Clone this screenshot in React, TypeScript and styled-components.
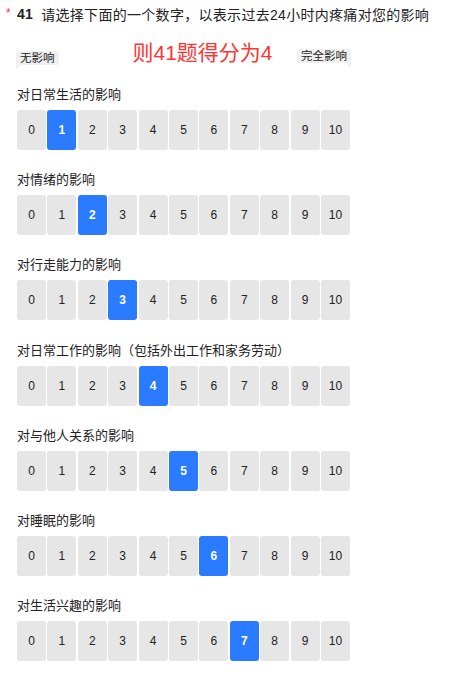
import React from "react";
import styled, { createGlobalStyle } from "styled-components";

const Global = createGlobalStyle`
  html, body { margin: 0; padding: 0; background: #fff; }
  body { font-family: "Liberation Sans", "Noto Sans CJK SC", sans-serif; color: #222; }
`;

const Page = styled.div`
  width: 450px;
  padding: 4px 0 0 0;
  box-sizing: border-box;
`;

const Title = styled.div`
  display: flex;
  align-items: center;
  height: 20px;
  font-size: 14px;
  letter-spacing: 0.3px;
  color: #222;
  white-space: nowrap;
`;

const Star = styled.span`
  color: #f33;
  font-size: 12px;
  width: 17px;
  text-align: center;
  margin-top: -2px;
`;

const Num = styled.span`
  font-weight: bold;
  margin-right: 8px;
`;

const ScaleRow = styled.div`
  display: flex;
  align-items: center;
  width: 335px;
  margin: 22px 0 0 16px;
  height: 22px;
`;

const Bubble = styled.div<{ $tail: "left" | "right" }>`
  position: relative;
  background: #f0f0f0;
  border-radius: 2px;
  font-size: 11.5px;
  line-height: 14px;
  padding: 0 4px;
  color: #222;
  margin-left: ${(p) => (p.$tail === "right" ? "auto" : "0")};
  margin-top: ${(p) => (p.$tail === "left" ? "2px" : "-2px")};
  &::after {
    content: "";
    position: absolute;
    top: 100%;
    ${(p) => (p.$tail === "left" ? "left: 0;" : "right: 0;")}
    border-style: solid;
    border-width: ${(p) => (p.$tail === "left" ? "5px 5px 0 0" : "5px 0 0 5px")};
    border-color: #f0f0f0 transparent transparent transparent;
  }
`;

const Score = styled.div`
  margin-left: 74px;
  font-size: 21px;
  color: #f33;
  line-height: 22px;
  margin-top: -8px;
`;

const Question = styled.div`
  margin: 0 0 0 17px;
`;

const List = styled.div`
  margin-top: 17px;
`;

const Label = styled.div`
  font-size: 13px;
  line-height: 20px;
  color: #222;
  margin-bottom: 5px;
  white-space: nowrap;
`;

const Buttons = styled.div`
  display: grid;
  grid-template-columns: repeat(11, 1fr);
  column-gap: 1.4px;
  width: 333px;
  margin-bottom: 20.2px;
`;

const Btn = styled.div<{ $on: boolean }>`
  height: 40px;
  border-radius: 3px;
  background: ${(p) => (p.$on ? "#2a7bff" : "#e6e6e6")};
  color: ${(p) => (p.$on ? "#fff" : "#222")};
  font-weight: ${(p) => (p.$on ? "bold" : "normal")};
  font-size: 12px;
  display: flex;
  align-items: center;
  justify-content: center;
`;

const items = [
  "对日常生活的影响",
  "对情绪的影响",
  "对行走能力的影响",
  "对日常工作的影响（包括外出工作和家务劳动）",
  "对与他人关系的影响",
  "对睡眠的影响",
  "对生活兴趣的影响",
];

export default function App() {
  return (
    <Page>
      <Global />
      <Title>
        <Star>*</Star>
        <Num>41</Num>
        请选择下面的一个数字，以表示过去24小时内疼痛对您的影响
      </Title>
      <ScaleRow>
        <Bubble $tail="left">无影响</Bubble>
        <Score>则41题得分为4</Score>
        <Bubble $tail="right">完全影响</Bubble>
      </ScaleRow>
      <List>
        {items.map((label, i) => (
          <Question key={label}>
            <Label>{label}</Label>
            <Buttons>
              {Array.from({ length: 11 }, (_, n) => (
                <Btn key={n} $on={n === i + 1}>
                  {n}
                </Btn>
              ))}
            </Buttons>
          </Question>
        ))}
      </List>
    </Page>
  );
}
